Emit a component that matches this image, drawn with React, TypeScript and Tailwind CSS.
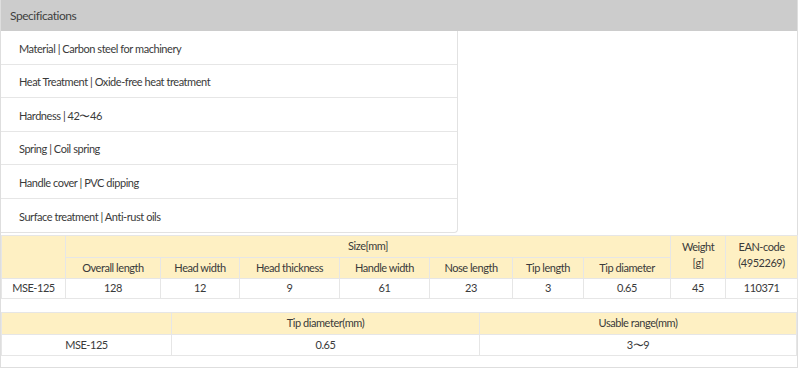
import React from 'react';

const specs = [
  'Material | Carbon steel for machinery',
  'Heat Treatment | Oxide-free heat treatment',
  'Hardness | 42〜46',
  'Spring | Coil spring',
  'Handle cover | PVC dipping',
  'Surface treatment | Anti-rust oils',
];

const sizeCols = [
  'Overall length',
  'Head width',
  'Head thickness',
  'Handle width',
  'Nose length',
  'Tip length',
  'Tip diameter',
];

const sizeWidths = [95, 79, 100, 90, 83, 71, 87];

const sizeRow = ['MSE-125', '128', '12', '9', '61', '23', '3', '0.65', '45', '110371'];

const cell = 'border border-[#e6e6e6] text-center font-normal align-middle p-0';

const App = () => {
  return (
    <div
      className="w-[798px] bg-white text-[11px] tracking-[-0.45px] text-[#3a3a3a] border-x border-b border-[#dedede]"
      style={{ fontFamily: 'Lato, "Noto Sans", sans-serif' }}
    >
      {/* panel title */}
      <div className="h-[31px] bg-[#cccccc] flex items-center px-[9px] text-[12px] text-[#3f3f3f]">
        Specifications
      </div>

      {/* spec list */}
      <ul className="w-[457px] border-r border-b border-[#e2e2e2] rounded-br-[4px]">
        {specs.map((s) => (
          <li
            key={s}
            className="h-[33.5px] flex items-center pl-[18px] pt-[3px] border-b border-[#e6e6e6] last:border-b-0"
          >
            {s}
          </li>
        ))}
      </ul>

      {/* size table */}
      <table className="mt-[2px] w-[796px] table-fixed border-collapse">
        <colgroup>
          <col className="w-[64px]" />
          {sizeWidths.map((w, i) => (
            <col key={i} style={{ width: w }} />
          ))}
          <col className="w-[55px]" />
          <col className="w-[72px]" />
        </colgroup>
        <thead>
          <tr className="bg-[#fef0c3] h-[22px]">
            <th rowSpan={2} className={cell}></th>
            <th colSpan={7} className={cell}>
              Size[mm]
            </th>
            <th rowSpan={2} className={`${cell} !align-top pt-[3px] leading-[16px]`}>
              Weight
              <br />
              [g]
            </th>
            <th rowSpan={2} className={`${cell} !align-top pt-[3px] leading-[16px]`}>
              EAN-code
              <br />
              (4952269)
            </th>
          </tr>
          <tr className="bg-[#fef0c3] h-[21px]">
            {sizeCols.map((c) => (
              <th key={c} className={cell}>
                {c}
              </th>
            ))}
          </tr>
        </thead>
        <tbody>
          <tr className="h-[20px]">
            {sizeRow.map((v, i) => (
              <td key={i} className={cell}>
                {v}
              </td>
            ))}
          </tr>
        </tbody>
      </table>

      {/* tip table */}
      <table className="mt-[13px] w-[796px] table-fixed border-collapse">
        <colgroup>
          <col className="w-[170px]" />
          <col className="w-[308px]" />
          <col />
        </colgroup>
        <thead>
          <tr className="bg-[#fef0c3] h-[22px]">
            <th className={cell}></th>
            <th className={cell}>Tip diameter(mm)</th>
            <th className={cell}>Usable range(mm)</th>
          </tr>
        </thead>
        <tbody>
          <tr className="h-[21px]">
            <td className={cell}>MSE-125</td>
            <td className={cell}>0.65</td>
            <td className={cell}>3〜9</td>
          </tr>
        </tbody>
      </table>
      <div className="h-[11px]" />
    </div>
  );
};

export default App;
